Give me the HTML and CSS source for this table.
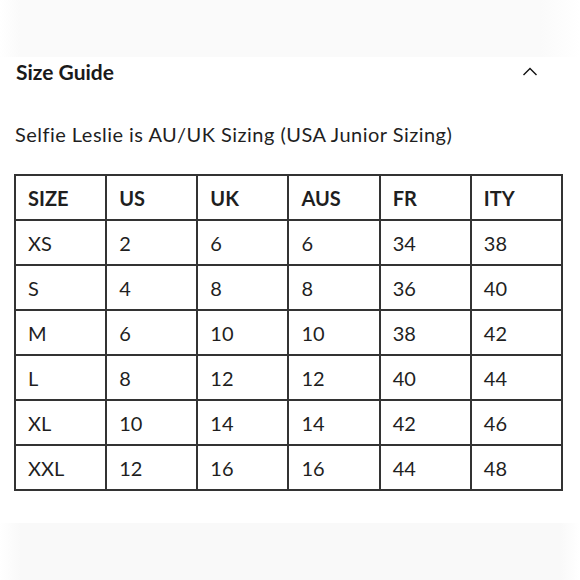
FILE: index.html
```html
<!DOCTYPE html>
<html>
<head>
<meta charset="utf-8">
<link rel="stylesheet" href="styles.css">
</head>
<body>
<div class="band-top"></div>
<div class="header">
  <h2 class="title">Size Guide</h2>
  <svg class="chevron" width="16" height="10" viewBox="0 0 16 10"><path d="M1.5 9 L8 2.5 L14.5 9" fill="none" stroke="#111" stroke-width="1.4"/></svg>
</div>
<p class="subtitle">Selfie Leslie is AU/UK Sizing (USA Junior Sizing)</p>
<table class="sizes">
  <thead>
    <tr><th>SIZE</th><th>US</th><th>UK</th><th>AUS</th><th>FR</th><th>ITY</th></tr>
  </thead>
  <tbody>
    <tr><td>XS</td><td>2</td><td>6</td><td>6</td><td>34</td><td>38</td></tr>
    <tr><td>S</td><td>4</td><td>8</td><td>8</td><td>36</td><td>40</td></tr>
    <tr><td>M</td><td>6</td><td>10</td><td>10</td><td>38</td><td>42</td></tr>
    <tr><td>L</td><td>8</td><td>12</td><td>12</td><td>40</td><td>44</td></tr>
    <tr><td>XL</td><td>10</td><td>14</td><td>14</td><td>42</td><td>46</td></tr>
    <tr><td>XXL</td><td>12</td><td>16</td><td>16</td><td>44</td><td>48</td></tr>
  </tbody>
</table>
<div class="band-bottom"></div>
</body>
</html>
```
FILE: styles.css
```css
html, body {
  margin: 0;
  padding: 0;
  background: #fff;
}
body {
  width: 580px;
  height: 580px;
  overflow: hidden;
  font-family: "Lato", "Noto Sans", sans-serif;
  color: #1c1c1c;
}
.band-top {
  height: 57px;
  background: linear-gradient(to right, #ffffff 0px, #fafafa 20px, #fafafa 540px, #ffffff 580px);
}
.header {
  display: flex;
  align-items: center;
  justify-content: space-between;
  height: 30px;
  padding: 0 42px 0 16px;
}
.title {
  margin: 0;
  font-size: 21px;
  line-height: 30px;
  font-weight: 700;
  color: #1a1a1a;
}
.chevron {
  display: block;
  margin-top: -3px;
}
.subtitle {
  margin: 33px 0 0 15px;
  font-size: 20px;
  line-height: 28px;
  font-weight: 400;
  letter-spacing: 0.47px;
  color: #1f1f1f;
}
.sizes {
  margin: 26px 0 0 14px;
  width: 549px;
  table-layout: fixed;
  border-collapse: collapse;
  border: 2px solid #333;
}
.sizes th, .sizes td {
  border: 2px solid #333;
  height: 43px;
  padding: 0 0 0 12px;
  text-align: left;
  font-size: 20px;
  color: #1f1f1f;
}
.sizes th {
  font-weight: 700;
}
.sizes td {
  font-weight: 400;
}
.band-bottom {
  margin-top: 32px;
  height: 60px;
  background: linear-gradient(to right, #ffffff 0px, #f9f9f9 20px, #f9f9f9 560px, #ffffff 580px);
}
```
